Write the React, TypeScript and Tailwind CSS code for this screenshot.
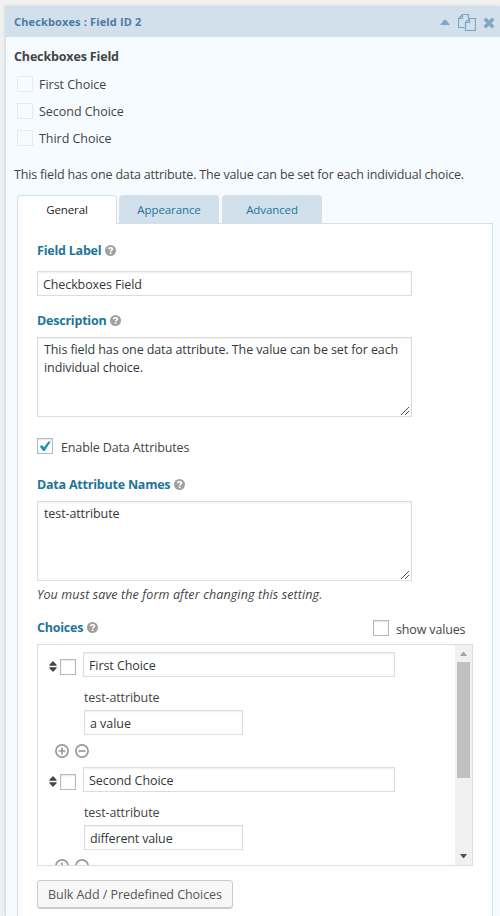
import type { ReactNode } from "react";

const HEADING = "font-bold text-[12.5px] text-[#21759b] pt-[2px] tracking-[-0.22px]";
const FIELD = "border border-[#ddd] bg-white shadow-[inset_0_1px_2px_rgba(0,0,0,0.07)]";

function Help() {
  return (
    <svg className="ml-[4px] mt-px h-[11px] w-[11px] shrink-0" viewBox="0 0 11 11">
      <circle cx="5.5" cy="5.5" r="5.5" fill="#a0a0a0" />
      <path d="M3.5 4.2C3.6 3 4.5 2.7 5.5 2.7s2 .4 2 1.3c0 1.2-1.8 1.2-1.8 2.6" fill="none" stroke="#fff" strokeWidth="1.6" />
      <path d="M4.8 7.4h1.7v1.6H4.8z" fill="#fff" />
    </svg>
  );
}

function Label({ children }: { children: ReactNode }) {
  return (
    <div className="flex h-[18px] items-center">
      <span className={HEADING}>{children}</span>
      <Help />
    </div>
  );
}

function Checkbox({ checked = false }: { checked?: boolean }) {
  return (
    <span className="flex h-4 w-4 shrink-0 items-center justify-center border border-[#b4b9be] bg-white shadow-[inset_0_1px_2px_rgba(0,0,0,0.1)]">
      {checked && (
        <svg className="h-[14px] w-[14px]" viewBox="0 0 14 14">
          <path d="M1.8 7.6 4 6l2 2.2L10.4 2.4l2.4.1L6.6 12H5.2z" fill="#1e8cbe" />
        </svg>
      )}
    </span>
  );
}

function TextArea({ children }: { children: ReactNode }) {
  return (
    <div className={`${FIELD} relative h-20 w-[375px] whitespace-nowrap pl-[6px] pt-[3px] text-[#32373c]`}>
      {children}
      <svg className="absolute bottom-px right-px h-[9px] w-[9px]" viewBox="0 0 9 9" shapeRendering="crispEdges">
        {[0, 1, 2, 3, 4, 5, 6, 7].map((i) => (
          <rect key={i} x={i} y={8 - i} width="1" height="1" fill="#555" />
        ))}
        {[4, 5, 6, 7].map((i) => (
          <rect key={i} x={i} y={12 - i} width="1" height="1" fill="#555" />
        ))}
      </svg>
    </div>
  );
}

function PlusMinus() {
  return (
    <div className="ml-[17px] mt-[9px] flex gap-[6px]">
      {[true, false].map((plus) => (
        <svg key={String(plus)} className="h-[14px] w-[14px]" viewBox="0 0 14 14" fill="none" stroke="#999" strokeWidth="1.7">
          <circle cx="7" cy="7" r="6.1" />
          <path d={plus ? "M3.5 7h7M7 3.5v7" : "M3.5 7h7"} />
        </svg>
      ))}
    </div>
  );
}

function Choice({ name, value, nameClass, valueClass }: { name: string; value: string; nameClass: string; valueClass: string }) {
  return (
    <div className="h-[115px]">
      <div className="flex">
        <svg className="ml-[11px] mt-[9px] h-[11px] w-[8px]" viewBox="0 0 8 11" fill="#444">
          <path d="M4 0 7.6 3.8v1H.4v-1zM.4 6.2h7.2v1L4 11 .4 7.2z" />
        </svg>
        <div className="ml-[3px] mt-[7px]">
          <Checkbox />
        </div>
        <div className={`${FIELD} ml-[7px] flex h-[25px] w-[312px] items-center pl-[5px] pt-[3px] text-[#32373c]`}>
          <span className={nameClass}>{name}</span>
        </div>
      </div>
      <div className="ml-[46px] mt-[12px] h-[17px]">
        <span className="tracking-[-0.1px]">test-attribute</span>
      </div>
      <div className={`${FIELD} ml-[46px] mt-1 flex h-[25px] w-[159px] items-center pl-[5px] pt-[3px] text-[#32373c]`}>
        <span className={valueClass}>{value}</span>
      </div>
      <PlusMinus />
    </div>
  );
}

const preview = [
  { label: "First Choice", className: "tracking-[-0.03px]" },
  { label: "Second Choice", className: "tracking-[-0.03px]" },
  { label: "Third Choice", className: "tracking-[-0.03px]" },
];

export default function App() {
  return (
    <div className="h-[916px] w-[500px] overflow-hidden bg-[#f1f1f1] pl-[5px] pt-[6px] font-['Open_Sans','Noto_Sans',sans-serif] text-[12.5px] leading-[18px] text-[#444]">
      <div className="h-[910px] border-l border-[#d2e0eb] bg-[#f6fbff] shadow-[0_0_4px_#d0d8dd]">
        <header className="flex h-[31px] items-center bg-[#d2e0eb] pl-2">
          <span className="text-[11px] font-bold tracking-[0.14px] text-[#4c7ba5]">Checkboxes : Field ID 2</span>
          <svg className="ml-auto mt-[2px] h-[5px] w-[10px]" viewBox="0 0 10 5">
            <path d="M0 5 4 0h2l4 5z" fill="#80a7c4" />
          </svg>
          <svg className="ml-2 mt-[2px] h-[18px] w-[18px]" viewBox="0 0 18 18" fill="none" stroke="#7aa8c0" strokeWidth="1.2">
            <path d="M6.5 13.5h-6V4.5l4-4h6v4M4.5.5v4h-4M7.5 8.5l4-4h6v12h-10zM11.5 4.5v4h-4" />
          </svg>
          <svg className="ml-[7px] mr-[5px] mt-[2px] h-3 w-3" viewBox="0 0 12 12">
            <path d="M1.8 1.8l8.4 8.4M10.2 1.8l-8.4 8.4" stroke="#80a7c4" strokeWidth="3.6" />
          </svg>
        </header>

        <section className="pl-2 pt-[11px]">
          <div className="h-[18px] font-bold text-[#444]">
            <span className="tracking-[-0.15px]">Checkboxes Field</span>
          </div>
          <div className="mt-[10px] flex flex-col gap-[11px]">
            {preview.map((p) => (
              <div key={p.label} className="flex h-4 items-center">
                <span className="ml-[3px] mr-[6px] h-4 w-4 border border-[#e8ebee]" />
                <span className={`pt-px ${p.className}`}>{p.label}</span>
              </div>
            ))}
          </div>
          <div className="mt-5 h-[17px] whitespace-nowrap">
            <span className="tracking-[-0.17px]">This field has one data attribute. The value can be set for each individual choice.</span>
          </div>
        </section>

        <nav className="relative z-10 ml-[11px] mt-3 flex h-[29px] text-[11.5px] tracking-[-0.1px] text-[#21759b]">
          <div className="flex h-[29px] w-[100px] items-center justify-center rounded-t-[4px] border border-b-0 border-[#d2e0eb] bg-white text-[#222]">
            <span>General</span>
          </div>
          <div className="ml-[2px] flex h-[28px] w-[100px] items-center justify-center rounded-t-[4px] bg-[#d2e0eb]">
            <span className="pt-px">Appearance</span>
          </div>
          <div className="ml-[3px] flex h-[28px] w-[100px] items-center justify-center rounded-t-[4px] bg-[#d2e0eb]">
            <span className="pt-px">Advanced</span>
          </div>
        </nav>

        <main className="-mt-px ml-[11px] h-[700px] w-[476px] border border-[#d2e0eb] bg-white pl-[19px] pt-[17px]">
          <Label>Field Label</Label>
          <div className={`${FIELD} mt-[12px] flex h-[25px] w-[375px] items-center pl-[5px] pt-[3px] text-[#32373c]`}>
            <span className="tracking-[-0.1px]">Checkboxes Field</span>
          </div>
          <div className="mt-[15px]">
            <Label>Description</Label>
          </div>
          <div className="mt-2">
            <TextArea>
              <p className="tracking-[-0.1px]">This field has one data attribute. The value can be set for each</p>
              <p className="tracking-[-0.08px]">individual choice.</p>
            </TextArea>
          </div>
          <div className="mt-[21px] flex h-4 items-center">
            <Checkbox checked />
            <span className="ml-2 pt-[3px] tracking-[-0.13px]">Enable Data Attributes</span>
          </div>
          <div className="mt-[21px]">
            <Label>Data Attribute Names</Label>
          </div>
          <div className="mt-2">
            <TextArea>
              <p className="tracking-[-0.1px]">test-attribute</p>
            </TextArea>
          </div>
          <p className="mt-[5px] h-[18px] italic tracking-[0.12px]">You must save the form after changing this setting.</p>
          <div className="mt-4 flex h-[24px] w-[436px] items-start">
            <div className="-mt-[2px]">
              <Label>Choices</Label>
            </div>
            <div className="ml-auto mr-[7px] flex h-4 items-center">
              <Checkbox />
              <span className="ml-[7px] w-[70px] whitespace-nowrap pt-[3px] tracking-[-0.15px]">show values</span>
            </div>
          </div>
          <div className="flex h-[222px] w-[436px] overflow-hidden border border-[#ddd]">
            <div className="flex-1 pt-[7px]">
              <Choice name="First Choice" value="a value" nameClass="tracking-[-0.08px]" valueClass="tracking-[-0.05px]" />
              <Choice name="Second Choice" value="different value" nameClass="tracking-[-0.05px]" valueClass="tracking-[-0.15px]" />
            </div>
            <div className="flex w-[17px] flex-col items-center bg-[#f1f1f1]">
              <svg className="mt-[7px] h-1 w-[7px]" viewBox="0 0 7 4">
                <path d="M0 4 3 0h1l3 4z" fill="#a3a3a3" />
              </svg>
              <div className="mt-[6px] h-[116px] w-[13px] bg-[#c1c1c1]" />
              <svg className="mb-[7px] mt-auto h-1 w-[7px]" viewBox="0 0 7 4">
                <path d="M0 0 3 4h1l3-4z" fill="#505050" />
              </svg>
            </div>
          </div>
          <button className="mt-[14px] flex h-[29px] w-[196px] items-center justify-center whitespace-nowrap rounded-[3px] border border-[#ccc] bg-[#f7f7f7] text-[#555] shadow-[inset_0_-1px_0_#ccc]">
            <span className="tracking-[-0.05px]">Bulk Add / Predefined Choices</span>
          </button>
        </main>
      </div>
    </div>
  );
}
